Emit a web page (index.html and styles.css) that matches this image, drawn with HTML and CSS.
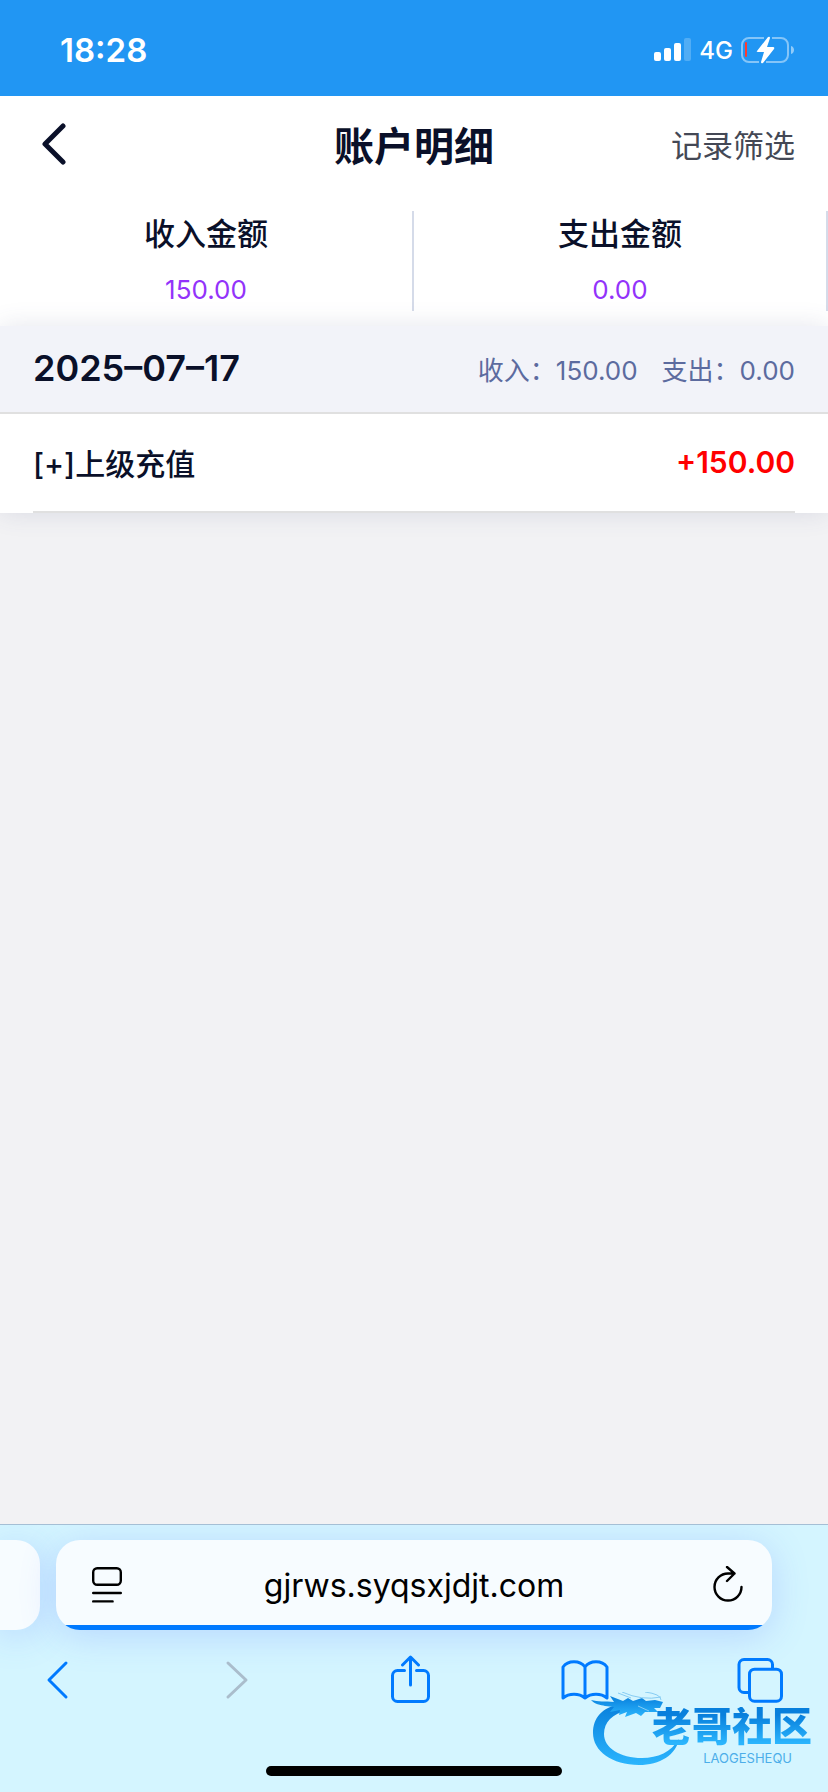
FILE: index.html
```html
<!DOCTYPE html>
<html lang="zh-CN">
  <head>
    <meta charset="UTF-8" />
    <meta name="viewport" content="width=device-width, initial-scale=1.0" />
    <title>账户明细</title>
    <link rel="stylesheet" href="styles.css">
  </head>
  <body>
    <!-- Status bar -->
    <div class="status-bar">
      <time class="status-time">18:28</time>
      <div class="status-icons">
        <svg width="37" height="24" viewBox="0 0 37 24" fill="#fff">
          <rect x="0" y="14" width="7" height="9" rx="2" />
          <rect x="10" y="10" width="7" height="13" rx="2" />
          <rect x="20" y="5" width="7" height="18" rx="2" />
          <rect x="30" y="0" width="7" height="23" rx="2" opacity="0.22" />
        </svg>
        <span class="network">4G</span>
        <svg width="53" height="28" viewBox="0 0 53 28">
          <path d="M23 2H8a7 7 0 0 0-7 7v10a7 7 0 0 0 7 7h10M31 2h9a7 7 0 0 1 7 7v10a7 7 0 0 1-7 7H25" fill="none" stroke="#fff" stroke-opacity="0.45" stroke-width="2" />
          <path d="M50 10c4 1 4 7 0 8z" fill="#fff" fill-opacity="0.5" />
          <rect x="4" y="6" width="2" height="15" rx="1" fill="#ff3b30" />
          <path d="M27 1L16 15q-1 1 1 1h6l-3 10q0 2 2 1l11-14q1-2-1-2h-6l3-9q0-2-2-1z" fill="#fff" />
        </svg>
      </div>
    </div>

    <!-- Header -->
    <header class="header">
      <button class="back-btn" type="button" aria-label="返回">
        <svg width="44" height="42" viewBox="0 0 44 42">
          <path d="M30 3L12 21l18 18" fill="none" stroke="#0a1029" stroke-width="5" stroke-linecap="round" stroke-linejoin="round" />
        </svg>
      </button>
      <h1>账户明细</h1>
      <a class="filter-link" href="#filter">记录筛选</a>
    </header>

    <!-- Totals -->
    <dl class="totals">
      <div class="total">
        <dt>收入金额</dt>
        <dd>150.00</dd>
      </div>
      <div class="total">
        <dt>支出金额</dt>
        <dd>0.00</dd>
      </div>
    </dl>

    <!-- Records -->
    <main class="records">
      <section class="day">
        <div class="day-header">
          <h2>2025–07–17</h2>
          <p class="day-summary">
            <span>收入：150.00</span>
            <span>支出：0.00</span>
          </p>
        </div>
        <ul class="record-list">
          <li class="record">
            <span>[+]上级充值</span>
            <span class="amount">+150.00</span>
          </li>
        </ul>
      </section>
    </main>

    <!-- Browser bar -->
    <footer class="browser">
      <div class="tabs">
        <div class="tab-prev"></div>
        <div class="tab">
          <button type="button" aria-label="页面菜单">
            <svg width="30" height="36" viewBox="0 0 30 36" fill="none" stroke="#000" stroke-width="2.4" stroke-linecap="round">
              <rect x="1.2" y="1.2" width="27.6" height="16.6" rx="4" />
              <path d="M1.2 26h27.6M1.2 34.4h19.4" />
            </svg>
          </button>
          <input class="address" type="text" aria-label="网址" value="gjrws.syqsxjdjt.com" readonly>
          <button type="button" aria-label="刷新">
            <svg width="30" height="38" viewBox="0 0 30 38" fill="none" stroke="#000" stroke-width="2.4" stroke-linecap="round" stroke-linejoin="round">
              <path d="M28.500 21a13.500 13.500 0 1 1-13.500-13.500h6.500M14 1l7.500 6.500-7.500 7.500" />
            </svg>
          </button>
        </div>
      </div>
      <nav class="toolbar">
        <button type="button" aria-label="后退">
          <svg width="48" height="50" viewBox="0 0 48 50">
            <path d="M33 8L16 25l17 17" />
          </svg>
        </button>
        <button type="button" aria-label="前进" disabled>
          <svg width="48" height="50" viewBox="0 0 48 50">
            <path d="M19 8l18 17-18 17" />
          </svg>
        </button>
        <button type="button" aria-label="分享">
          <svg width="48" height="50" viewBox="0 0 48 50">
            <path d="M19.500 15.500h-7a5 5 0 0 0-5 5v21a5 5 0 0 0 5 5h26a5 5 0 0 0 5-5v-21a5 5 0 0 0-5-5h-7M25.500 30V2.500M17.500 10l8-8 8 8" />
          </svg>
        </button>
        <button type="button" aria-label="书签">
          <svg width="48" height="50" viewBox="0 0 48 50">
            <path d="M24 12C19 5 7 5 2 12v31c6-5 16-5 22 0 6-5 16-5 22 0V12C41 5 29 5 24 12zM24 12v31" />
          </svg>
        </button>
        <button type="button" aria-label="标签页">
          <svg width="48" height="50" viewBox="0 0 48 50">
            <path d="M12 37.500H7a5 5 0 0 1-5-5V9.500a5 5 0 0 1 5-5h23.500a5 5 0 0 1 5 5v4" />
            <rect x="12.500" y="14.200" width="32" height="32" rx="5" />
          </svg>
        </button>
      </nav>
      <div class="home-indicator"></div>

      <!-- Community logo -->
      <div class="watermark">
        <svg class="dragon" width="92" height="76" viewBox="0 0 92 76">
          <defs>
            <linearGradient id="dragonFill" x1="0" y1="0" x2="0" y2="1">
              <stop offset="0" stop-color="#087fdc" />
              <stop offset="1" stop-color="#2bb5fd" />
            </linearGradient>
          </defs>
          <g fill="url(#dragonFill)">
            <path d="M31 12C12 15 3 26 3 41c0 18 19 32 46 32 21 0 37-10 40-26-8 13-21 19-37 19-22 0-38-10-38-24 0-12 8-20 24-24l9-3z" />
            <path d="M1 8c7 2 14 1 23 2l-4-6 13 5 5-3 5 3 9-3 4 3 9-1 8 2-3 6-6 0 4 4-13 0-4 4-5-3-11 4 2-5-8 3 1-5-10 2 4-5-9-1C11 13 4 12 1 8z" />
          </g>
          <path d="M28 1l13 5M32 0q20 9 39 5M55 0q16 2 16 8M48 14l11 5" fill="none" stroke="#86ccf3" stroke-width="1" />
        </svg>
        <div class="watermark-text">
          <strong>老哥社区</strong>
          <small>LAOGESHEQU</small>
        </div>
      </div>
    </footer>
  </body>
</html>
```

FILE: styles.css
```css
* {
  margin: 0;
  padding: 0;
  box-sizing: border-box;
}

body {
  display: flex;
  flex-direction: column;
  min-height: 100vh;
  font-family: Inter, "Noto Sans CJK SC", sans-serif;
  color: #0a1029;
  background: #f2f2f4;
}

button {
  display: flex;
  border: none;
  background: none;
  cursor: pointer;
}

svg {
  display: block;
}

/* Status bar */
.status-bar {
  display: flex;
  justify-content: space-between;
  align-items: center;
  height: 96px;
  padding: 4px 34px 0 60px;
  color: #fff;
  background: #2196f3;
}

.status-time {
  font-size: 33px;
  font-weight: 600;
}

.status-icons {
  display: flex;
  align-items: center;
  gap: 8px;
}

.network {
  font-size: 24px;
  font-weight: 500;
}

/* Header */
.header {
  display: grid;
  grid-template-columns: 1fr auto 1fr;
  align-items: center;
  height: 100px;
  padding: 0 33px 5px;
  background: #fff;
}

.back-btn {
  justify-self: start;
}

.header h1 {
  font-size: 40px;
  font-weight: 700;
}

.filter-link {
  justify-self: end;
  font-size: 31px;
  color: #444855;
  text-decoration: none;
}

/* Totals */
.totals {
  display: flex;
  padding: 15px 0;
  background: #fff;
}

.total {
  flex: 1;
  padding: 1px 0 3px;
  border-right: 2px solid #d5dbe9;
  text-align: center;
}

.total dt {
  font-size: 31px;
  font-weight: 500;
  line-height: 44px;
}

.total dd {
  margin-top: 16px;
  font-size: 26px;
  line-height: 36px;
  color: #9333fa;
}

/* Records */
.records {
  flex: 1;
}

.day {
  box-shadow: 0 0 24px rgba(70, 80, 130, 0.14);
}

.day-header {
  display: flex;
  justify-content: space-between;
  align-items: center;
  height: 88px;
  padding: 0 33px 2px;
  border-bottom: 2px solid #e0e0e0;
  background: #f2f3f9;
}

.day-header h2 {
  font-size: 36px;
  font-weight: 600;
}

.day-summary {
  display: flex;
  gap: 24px;
  font-size: 26px;
  color: #5c6b9f;
}

.record-list {
  padding: 0 33px;
  list-style: none;
  background: #fff;
}

.record {
  display: flex;
  justify-content: space-between;
  align-items: center;
  height: 99px;
  padding-bottom: 2px;
  border-bottom: 2px solid #e0e0e0;
  font-size: 30px;
  font-weight: 500;
}

.amount {
  font-weight: 600;
  color: #f00;
}

/* Browser bar */
.browser {
  position: relative;
  height: 268px;
  padding-top: 15px;
  border-top: 1px solid #a5bfd5;
  background: #d4f5ff;
  overflow: hidden;
}

.tabs {
  display: flex;
  gap: 16px;
  padding-right: 56px;
}

.tab,
.tab-prev {
  height: 90px;
  background: #f7fcff;
  box-shadow: 0 6px 36px rgba(90, 120, 255, 0.24);
}

.tab-prev {
  width: 40px;
  border-radius: 0 24px 24px 0;
}

.tab {
  display: flex;
  flex: 1;
  justify-content: space-between;
  align-items: center;
  padding: 0 29px 0 36px;
  border-radius: 24px;
  background: linear-gradient(#007aff, #007aff) bottom / 100% 5px no-repeat #f7fcff;
}

.address {
  flex: 1;
  min-width: 0;
  padding-right: 7px;
  border: none;
  outline: none;
  background: none;
  font-family: inherit;
  font-size: 32px;
  text-align: center;
  color: #000;
}

.toolbar {
  display: flex;
  justify-content: space-between;
  padding: 25px 43px 0 33px;
}

.toolbar svg {
  fill: none;
  stroke: #007aff;
  stroke-width: 3;
  stroke-linecap: round;
  stroke-linejoin: round;
}

.toolbar button:disabled svg {
  stroke: #aabdcc;
}

.home-indicator {
  width: 296px;
  height: 10px;
  margin: 61px auto 0;
  border-radius: 5px;
  background: #000;
}

/* Logo lies over the toolbar */
.watermark {
  position: absolute;
  right: 16px;
  bottom: 24px;
  width: 222px;
  height: 76px;
}

.dragon {
  position: absolute;
  left: 0;
  top: 0;
}

.watermark-text {
  position: absolute;
  right: 0;
  bottom: 3px;
  display: flex;
  flex-direction: column;
  align-items: flex-end;
  gap: 4px;
}

.watermark strong {
  font-size: 40px;
  font-weight: 900;
  line-height: 40px;
  color: transparent;
  background: linear-gradient(#087fdc 20%, #2bb5fd 90%);
  background-clip: text;
}

.watermark small {
  padding-right: 20px;
  font-size: 13px;
  line-height: 14px;
  color: #4caee9;
}
```
